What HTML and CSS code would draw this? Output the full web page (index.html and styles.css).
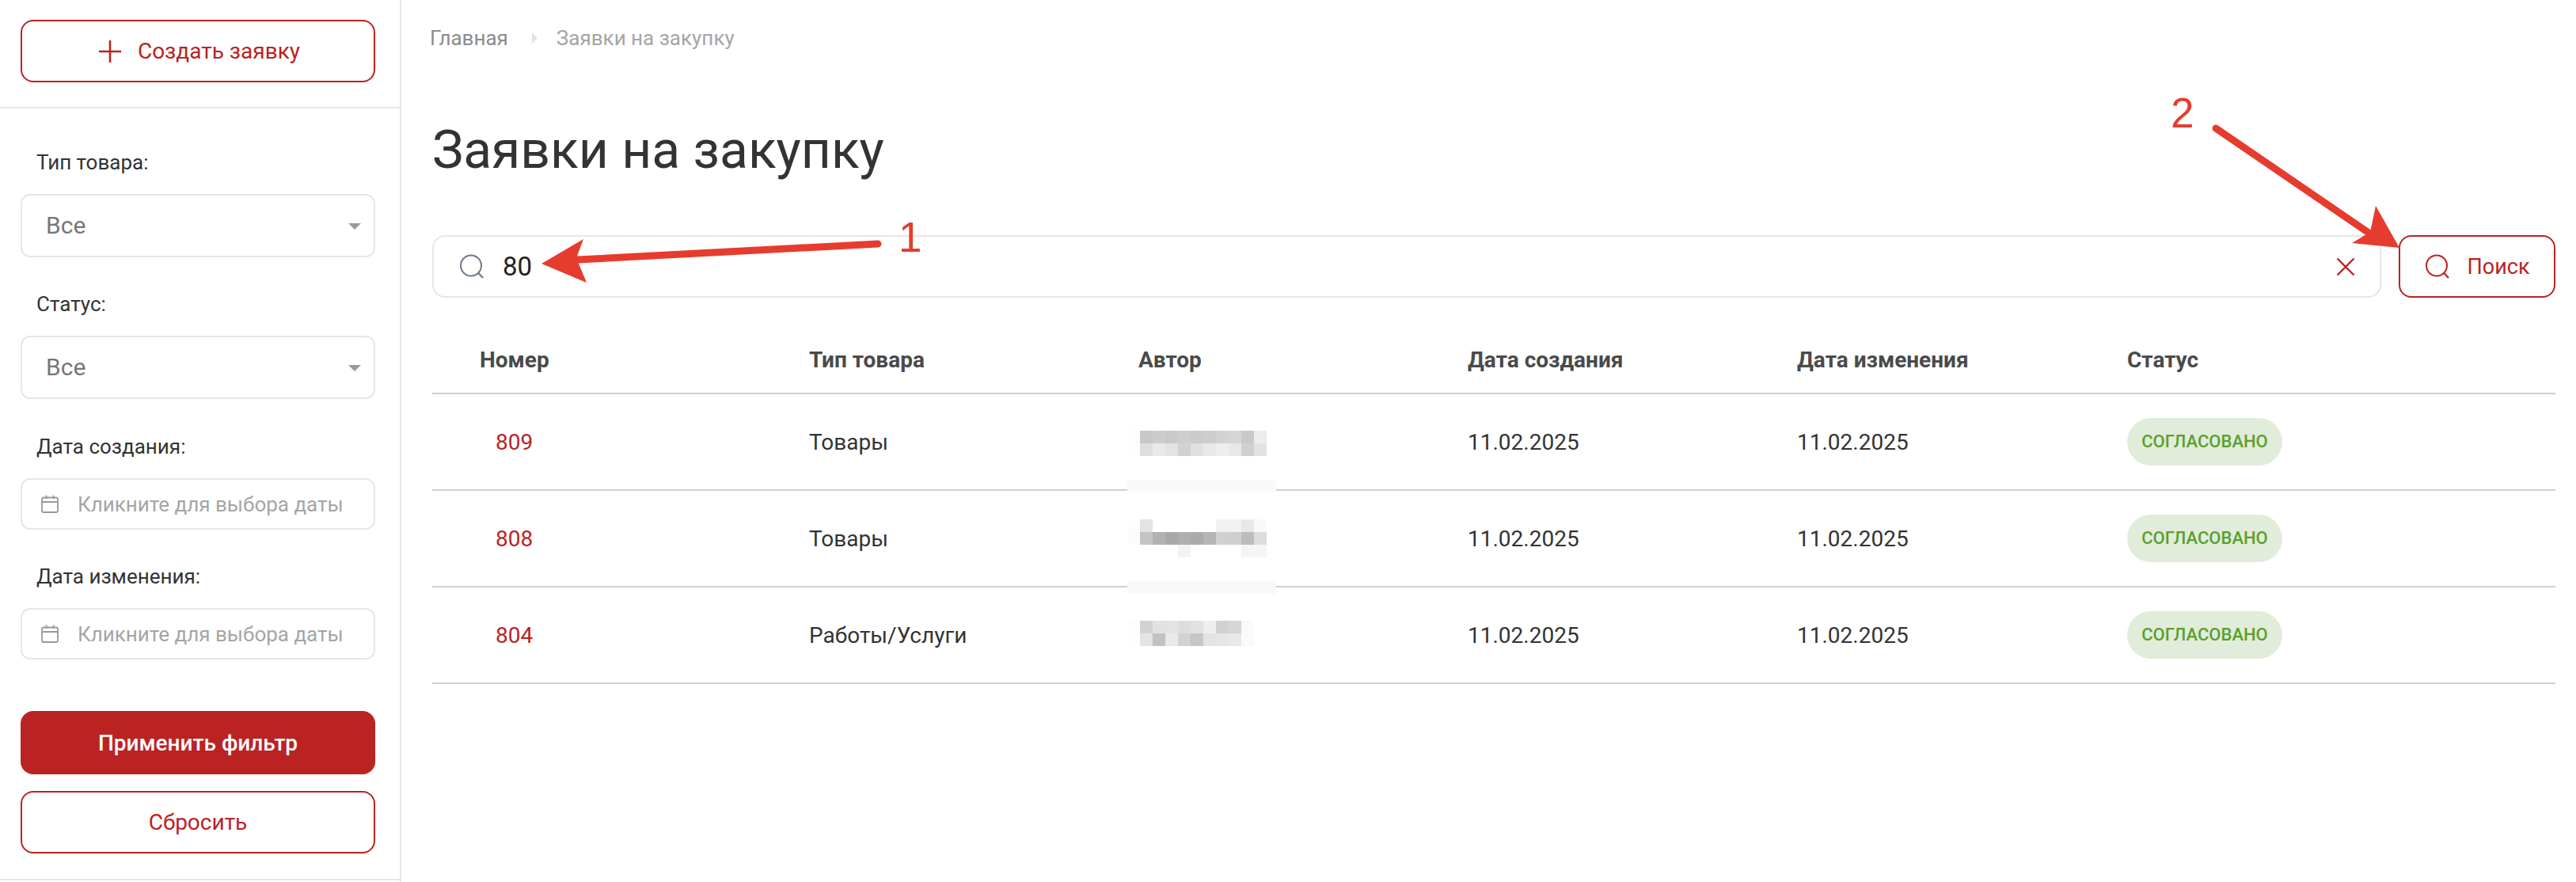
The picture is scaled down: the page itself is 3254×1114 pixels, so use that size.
FILE: index.html
```html
<!DOCTYPE html>
<html lang="ru">
<head>
    <meta charset="UTF-8">
    <title>Заявки на закупку</title>
    <link rel="stylesheet" href="styles.css">
</head>
<body>
    <div class="page">
        <aside class="sidebar">
            <div class="sidebar-top">
                <button class="btn btn-outline btn-create">
                    <svg class="icon-plus" viewBox="0 0 28 28"><path d="M14 0V28M0 14H28" fill="none" stroke="currentColor" stroke-width="2.6"/></svg>
                    Создать заявку
                </button>
            </div>
            <form class="filters">
                <div class="form-group">
                    <label>Тип товара:</label>
                    <div class="select">Все<span class="caret"></span></div>
                </div>
                <div class="form-group">
                    <label>Статус:</label>
                    <div class="select">Все<span class="caret"></span></div>
                </div>
                <div class="form-group form-group-date">
                    <label>Дата создания:</label>
                    <div class="date-input">
                        <svg class="icon-calendar" viewBox="0 0 22 23"><path d="M3 3.5H19Q21 3.5 21 5.5V20Q21 22 19 22H3Q1 22 1 20V5.5Q1 3.5 3 3.5ZM1 9H21M6.5 0.5V5M15.5 0.5V5" fill="none" stroke="currentColor" stroke-width="1.8"/></svg>
                        Кликните для выбора даты
                    </div>
                </div>
                <div class="form-group form-group-date">
                    <label>Дата изменения:</label>
                    <div class="date-input">
                        <svg class="icon-calendar" viewBox="0 0 22 23"><path d="M3 3.5H19Q21 3.5 21 5.5V20Q21 22 19 22H3Q1 22 1 20V5.5Q1 3.5 3 3.5ZM1 9H21M6.5 0.5V5M15.5 0.5V5" fill="none" stroke="currentColor" stroke-width="1.8"/></svg>
                        Кликните для выбора даты
                    </div>
                </div>
                <button type="button" class="btn btn-primary">Применить фильтр</button>
                <button type="button" class="btn btn-outline btn-reset">Сбросить</button>
            </form>
        </aside>

        <main class="content">
            <nav class="breadcrumb">
                <span class="crumb-link">Главная</span>
                <span class="crumb-sep"></span>
                <span class="crumb-current">Заявки на закупку</span>
            </nav>
            <h1>Заявки на закупку</h1>

            <div class="search-row">
                <div class="search-box">
                    <svg class="icon-search icon-search-grey" viewBox="0 0 32 32"><circle cx="15" cy="14.5" r="13" fill="none" stroke="currentColor" stroke-width="2"/><path d="M24.5 24L30 30" fill="none" stroke="currentColor" stroke-width="2.2"/></svg>
                    <span class="search-value">80</span>
                    <svg class="icon-close" viewBox="0 0 24 24"><path d="M1.5 1.5L22.5 22.5M22.5 1.5L1.5 22.5" fill="none" stroke="currentColor" stroke-width="2.4"/></svg>
                </div>
                <button class="btn btn-outline btn-search">
                    <svg class="icon-search" viewBox="0 0 32 32"><circle cx="15" cy="14.5" r="13" fill="none" stroke="currentColor" stroke-width="2"/><path d="M24.5 24L30 30" fill="none" stroke="currentColor" stroke-width="2.2"/></svg>
                    Поиск
                </button>
            </div>

            <table class="orders">
                <thead>
                    <tr>
                        <th>Номер</th>
                        <th>Тип товара</th>
                        <th>Автор</th>
                        <th>Дата создания</th>
                        <th>Дата изменения</th>
                        <th>Статус</th>
                    </tr>
                </thead>
                <tbody>
                    <tr>
                        <td><a class="order-link">809</a></td>
                        <td>Товары</td>
                        <td class="author">
                            <svg class="mosaic" viewBox="0 0 176 64">
                                <g transform="translate(0 18)">
                                    <rect x="0" width="16" height="16" fill="#fdfdfd"/><rect x="16" width="16" height="16" fill="#c8c8c8"/><rect x="32" width="16" height="16" fill="#cccccc"/><rect x="48" width="16" height="16" fill="#c9c9c9"/><rect x="64" width="16" height="16" fill="#cecece"/><rect x="80" width="16" height="16" fill="#cbcbcb"/><rect x="96" width="16" height="16" fill="#cdcdcd"/><rect x="112" width="16" height="16" fill="#d3d3d3"/><rect x="128" width="16" height="16" fill="#d6d6d6"/><rect x="144" width="16" height="16" fill="#c9c9c9"/><rect x="160" width="16" height="16" fill="#ececec"/>
                                </g>
                                <g transform="translate(0 34)">
                                    <rect x="0" width="16" height="16" fill="#fefefe"/><rect x="16" width="16" height="16" fill="#dedede"/><rect x="32" width="16" height="16" fill="#e9e9e9"/><rect x="48" width="16" height="16" fill="#e3e3e3"/><rect x="64" width="16" height="16" fill="#d2d2d2"/><rect x="80" width="16" height="16" fill="#e0e0e0"/><rect x="96" width="16" height="16" fill="#e9e9e9"/><rect x="112" width="16" height="16" fill="#eeeeee"/><rect x="128" width="16" height="16" fill="#e8e8e8"/><rect x="144" width="16" height="16" fill="#d0d0d0"/><rect x="160" width="16" height="16" fill="#e2e2e2"/>
                                </g>
                            </svg>
                            <span class="patch patch-first"></span>
                        </td>
                        <td>11.02.2025</td>
                        <td>11.02.2025</td>
                        <td><span class="badge">СОГЛАСОВАНО</span></td>
                    </tr>
                    <tr>
                        <td><a class="order-link">808</a></td>
                        <td>Товары</td>
                        <td class="author">
                            <svg class="mosaic" viewBox="0 0 176 64">
                                <g transform="translate(0 8)">
                                    <rect x="0" width="16" height="16" fill="#fdfdfd"/><rect x="16" width="16" height="16" fill="#e3e3e3"/><rect x="112" width="16" height="16" fill="#f1f1f1"/><rect x="128" width="16" height="16" fill="#f2f2f2"/><rect x="144" width="16" height="16" fill="#e8e8e8"/><rect x="160" width="16" height="16" fill="#f9f9f9"/>
                                </g>
                                <g transform="translate(0 24)">
                                    <rect x="0" width="16" height="16" fill="#fcfcfc"/><rect x="16" width="16" height="16" fill="#c4c4c4"/><rect x="32" width="16" height="16" fill="#b2b2b2"/><rect x="48" width="16" height="16" fill="#a9a9a9"/><rect x="64" width="16" height="16" fill="#afafaf"/><rect x="80" width="16" height="16" fill="#ababab"/><rect x="96" width="16" height="16" fill="#b5b5b5"/><rect x="112" width="16" height="16" fill="#d0d0d0"/><rect x="128" width="16" height="16" fill="#cfcfcf"/><rect x="144" width="16" height="16" fill="#bdbdbd"/><rect x="160" width="16" height="16" fill="#dcdcdc"/>
                                </g>
                                <g transform="translate(0 40)">
                                    <rect x="64" width="16" height="16" fill="#f3f3f3"/><rect x="144" width="16" height="16" fill="#f5f5f5"/><rect x="160" width="16" height="16" fill="#f5f5f5"/>
                                </g>
                            </svg>
                            <span class="patch patch-second"></span>
                        </td>
                        <td>11.02.2025</td>
                        <td>11.02.2025</td>
                        <td><span class="badge">СОГЛАСОВАНО</span></td>
                    </tr>
                    <tr>
                        <td><a class="order-link">804</a></td>
                        <td>Работы/Услуги</td>
                        <td class="author">
                            <svg class="mosaic" viewBox="0 0 176 64">
                                <g transform="translate(0 14)">
                                    <rect x="0" width="16" height="16" fill="#fdfdfd"/><rect x="16" width="16" height="16" fill="#d2d2d2"/><rect x="32" width="16" height="16" fill="#e2e2e2"/><rect x="48" width="16" height="16" fill="#e3e3e3"/><rect x="64" width="16" height="16" fill="#dddddd"/><rect x="80" width="16" height="16" fill="#e2e2e2"/><rect x="96" width="16" height="16" fill="#efefef"/><rect x="112" width="16" height="16" fill="#d1d1d1"/><rect x="128" width="16" height="16" fill="#d6d6d6"/><rect x="144" width="16" height="16" fill="#fafafa"/>
                                </g>
                                <g transform="translate(0 30)">
                                    <rect x="0" width="16" height="16" fill="#fefefe"/><rect x="16" width="16" height="16" fill="#e4e4e4"/><rect x="32" width="16" height="16" fill="#c2c2c2"/><rect x="48" width="16" height="16" fill="#e9e9e9"/><rect x="64" width="16" height="16" fill="#d2d2d2"/><rect x="80" width="16" height="16" fill="#c6c6c6"/><rect x="96" width="16" height="16" fill="#e4e4e4"/><rect x="112" width="16" height="16" fill="#e6e6e6"/><rect x="128" width="16" height="16" fill="#e9e9e9"/><rect x="144" width="16" height="16" fill="#fafafa"/>
                                </g>
                            </svg>
                        </td>
                        <td>11.02.2025</td>
                        <td>11.02.2025</td>
                        <td><span class="badge">СОГЛАСОВАНО</span></td>
                    </tr>
                </tbody>
            </table>
        </main>

        <!-- red annotations drawn over the screenshot -->
        <svg class="annotations" viewBox="0 0 3254 1114">
            <path d="M1109 308L730 328" stroke="#e63c2f" stroke-width="9" stroke-linecap="round" fill="none"/>
            <polygon points="684,333 737,302 728,326 741,357" fill="#e63c2f"/>
            <path d="M2799 162L2995 296" stroke="#e63c2f" stroke-width="9" stroke-linecap="round" fill="none"/>
            <polygon points="3031,313 3001,260 2994,293 2971,307" fill="#e63c2f"/>
        </svg>
        <span class="mark mark-one">1</span>
        <span class="mark mark-two">2</span>
    </div>
</body>
</html>
```

FILE: styles.css
```css
* {
    box-sizing: border-box;
}
body {
    margin: 0;
    background: #fff;
    font-family: Roboto, "Liberation Sans", sans-serif;
    color: #333;
}
.page {
    position: relative;
    display: flex;
    height: 1114px;
    overflow: hidden;
}

/* sidebar */
.sidebar {
    width: 507px;
    flex-shrink: 0;
    border-right: 2px solid #e6e6e6;
}
.sidebar-top {
    height: 137px;
    padding: 25px 31px 0 26px;
    border-bottom: 2px solid #e6e6e6;
}
.btn {
    display: flex;
    align-items: center;
    justify-content: center;
    width: 100%;
    border-radius: 16px;
    font-family: inherit;
    font-size: 28px;
    cursor: pointer;
}
.btn-outline {
    background: #fff;
    border: 2px solid #bb2222;
    color: #bb2222;
}
.btn-primary {
    height: 80px;
    margin-top: 65px;
    background: #bb2323;
    border: none;
    color: #fff;
    font-weight: 500;
}
.btn-create {
    height: 79px;
    gap: 21px;
    padding-left: 10px;
}
.btn-reset {
    height: 79px;
    margin-top: 21px;
}
.icon-plus {
    width: 28px;
    height: 28px;
}
.filters {
    height: 975px;
    padding: 0 31px 0 26px;
    border-bottom: 2px solid #e6e6e6;
}
.form-group {
    padding-top: 41px;
}
.form-group:first-child {
    padding-top: 50px;
}
.form-group label {
    display: block;
    height: 36px;
    margin-left: 20px;
    margin-bottom: 22px;
    font-size: 26px;
    line-height: 36px;
}
.form-group-date {
    padding-top: 42px;
}
.form-group-date + .form-group-date {
    padding-top: 41px;
}
.select {
    position: relative;
    height: 80px;
    padding-left: 30px;
    border: 2px solid #e6e6e6;
    border-radius: 12px;
    font-size: 30px;
    line-height: 76px;
    color: #777;
}
.caret {
    position: absolute;
    right: 16px;
    top: 35px;
    border-top: 8px solid #999;
    border-left: 8px solid transparent;
    border-right: 8px solid transparent;
}
.date-input {
    display: flex;
    align-items: center;
    gap: 24px;
    height: 65px;
    padding-left: 24px;
    border: 2px solid #e6e6e6;
    border-radius: 12px;
    font-size: 26px;
    color: #a5a5a5;
}
.icon-calendar {
    width: 22px;
    height: 23px;
    color: #999;
}

/* main part */
.content {
    flex: 1;
    min-width: 0;
    padding: 33px 26px 0 39px;
}
.breadcrumb {
    display: flex;
    align-items: center;
    height: 30px;
    margin-left: -3px;
    font-size: 26px;
}
.crumb-link {
    color: #8c8c8c;
}
.crumb-sep {
    width: 0;
    margin: 0 24px 0 30px;
    border-left: 7px solid #e3e3e3;
    border-top: 7px solid transparent;
    border-bottom: 7px solid transparent;
}
.crumb-current {
    color: #a5a5a5;
}
h1 {
    margin: 82px 0 0;
    height: 90px;
    font-size: 66px;
    font-weight: 400;
    line-height: 90px;
    color: #333;
}
.search-row {
    display: flex;
    gap: 22px;
    margin-top: 62px;
}
.search-box {
    flex: 1;
    display: flex;
    align-items: center;
    height: 79px;
    padding: 0 31px 0 32px;
    border: 2px solid #e6e6e6;
    border-radius: 16px;
}
.icon-search {
    width: 32px;
    height: 32px;
}
.icon-search-grey {
    color: #6d7a86;
}
.search-value {
    flex: 1;
    margin-left: 23px;
    font-size: 33px;
    color: #222;
}
.icon-close {
    width: 24px;
    height: 24px;
    color: #bb2222;
}
.btn-search {
    width: 198px;
    height: 79px;
    gap: 22px;
    font-size: 27px;
}
.orders {
    width: 100%;
    margin-top: 37px;
    border-collapse: separate;
    border-spacing: 0;
    table-layout: fixed;
    font-size: 28px;
}
.orders th {
    width: 416px;
    height: 85px;
    padding: 0 0 0 60px;
    border-bottom: 2px solid #d0cfd6;
    text-align: left;
    font-weight: 700;
    font-size: 28px;
    color: #4a4a4a;
}
.orders th:last-child {
    width: auto;
    padding-left: 61px;
}
.orders td {
    height: 122px;
    padding: 0 0 0 60px;
    border-bottom: 2px solid #d0cfd6;
    color: #333;
}
.orders td:last-child {
    padding-left: 61px;
}
.order-link {
    margin-left: 20px;
    color: #bb2222;
}
.orders td.author {
    position: relative;
    padding-left: 46px;
}
.mosaic {
    display: block;
    width: 176px;
    height: 64px;
}
.patch {
    position: absolute;
    left: 46px;
    width: 188px;
    height: 16px;
    background: #f9f9f9;
}
.patch-first {
    bottom: -4px;
}
.patch-second {
    bottom: -10px;
}
.badge {
    display: inline-block;
    width: 196px;
    height: 60px;
    border-radius: 30px;
    background: #e1ecdb;
    color: #5aa02c;
    font-size: 22px;
    font-weight: 500;
    line-height: 60px;
    text-align: center;
}

/* annotations */
.annotations {
    position: absolute;
    left: 0;
    top: 0;
    width: 3254px;
    height: 1114px;
    pointer-events: none;
}
.mark {
    position: absolute;
    font-family: "Liberation Sans", sans-serif;
    font-size: 53px;
    line-height: 53px;
    color: #e63c2f;
}
.mark-one {
    left: 1135px;
    top: 273px;
}
.mark-two {
    left: 2742px;
    top: 116px;
}
```
